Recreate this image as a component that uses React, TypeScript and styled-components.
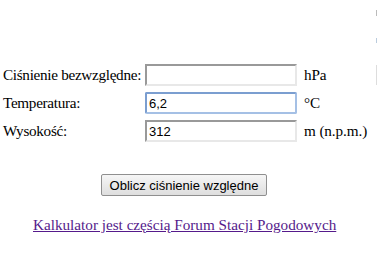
import React from "react";
import styled, { createGlobalStyle } from "styled-components";

const Global = createGlobalStyle`
  html, body {
    margin: 0;
    padding: 0;
    background: #ffffff;
  }
  body {
    font-family: "Liberation Serif", "Times New Roman", serif;
    font-size: 15px;
    color: #000000;
  }
`;

const Page = styled.div`
  width: 377px;
  height: 253px;
  position: relative;
  overflow: hidden;
  padding-top: 64px;
  box-sizing: border-box;
`;

const Form = styled.div`
  display: grid;
  grid-template-columns: 142px 152px auto;
  row-gap: 6px;
  align-items: center;
  padding-left: 3px;
`;

const Label = styled.span`
  font-size: 15.2px;
  line-height: 22px;
  letter-spacing: -0.3px;
  white-space: nowrap;
`;

const Unit = styled.span`
  font-size: 15.2px;
  line-height: 22px;
  letter-spacing: -0.1px;
  white-space: nowrap;
  padding-left: 7px;
`;

const Field = styled.input<{ $focused?: boolean }>`
  box-sizing: border-box;
  width: 152px;
  height: 22px;
  margin: 0;
  padding: 1px 2px;
  font-family: "Liberation Sans", Arial, sans-serif;
  font-size: 13px;
  color: #000;
  background: #fff;
  outline: none;
  border-style: solid;
  border-width: 2px;
  border-color: ${(p) =>
    p.$focused ? "#7b9ed0 #a5c0e5 #a5c0e5 #7b9ed0" : "#999999 #e8e8e8 #e8e8e8 #999999"};
  border-radius: ${(p) => (p.$focused ? "2px" : "0")};
`;

const ButtonRow = styled.div`
  padding-left: 101px;
  margin-top: 32px;
`;

const Button = styled.button`
  box-sizing: border-box;
  width: 166px;
  height: 22px;
  margin: 0;
  padding: 0 6px;
  font-family: "Liberation Sans", Arial, sans-serif;
  font-size: 13px;
  color: #000;
  border: 1px solid #8f8f8f;
  border-radius: 2px;
  background: linear-gradient(#f6f6f6, #dedede);
`;

const LinkRow = styled.div`
  padding-left: 33px;
  margin-top: 20px;
`;

const Link = styled.a`
  color: #551a8b;
  text-decoration: underline;
  font-size: 15.2px;
`;

const EdgeMark = styled.div`
  position: absolute;
  right: 0;
  top: 10px;
  width: 1px;
  height: 75px;
  background: linear-gradient(#bbb 0, #bbb 6px, transparent 6px, transparent 28px, #bcd 28px, #bcd 33px, transparent 33px, transparent 55px, #ddd 55px);
`;

export default function App() {
  return (
    <Page>
      <Global />
      <Form>
        <Label>Ciśnienie bezwzględne:</Label>
        <Field type="text" defaultValue="" />
        <Unit>hPa</Unit>
        <Label>Temperatura:</Label>
        <Field type="text" defaultValue="6,2" $focused />
        <Unit>°C</Unit>
        <Label>Wysokość:</Label>
        <Field type="text" defaultValue="312" />
        <Unit>m (n.p.m.)</Unit>
      </Form>
      <ButtonRow>
        <Button type="button">Oblicz ciśnienie względne</Button>
      </ButtonRow>
      <LinkRow>
        <Link href="#">Kalkulator jest częścią Forum Stacji Pogodowych</Link>
      </LinkRow>
      <EdgeMark />
    </Page>
  );
}
